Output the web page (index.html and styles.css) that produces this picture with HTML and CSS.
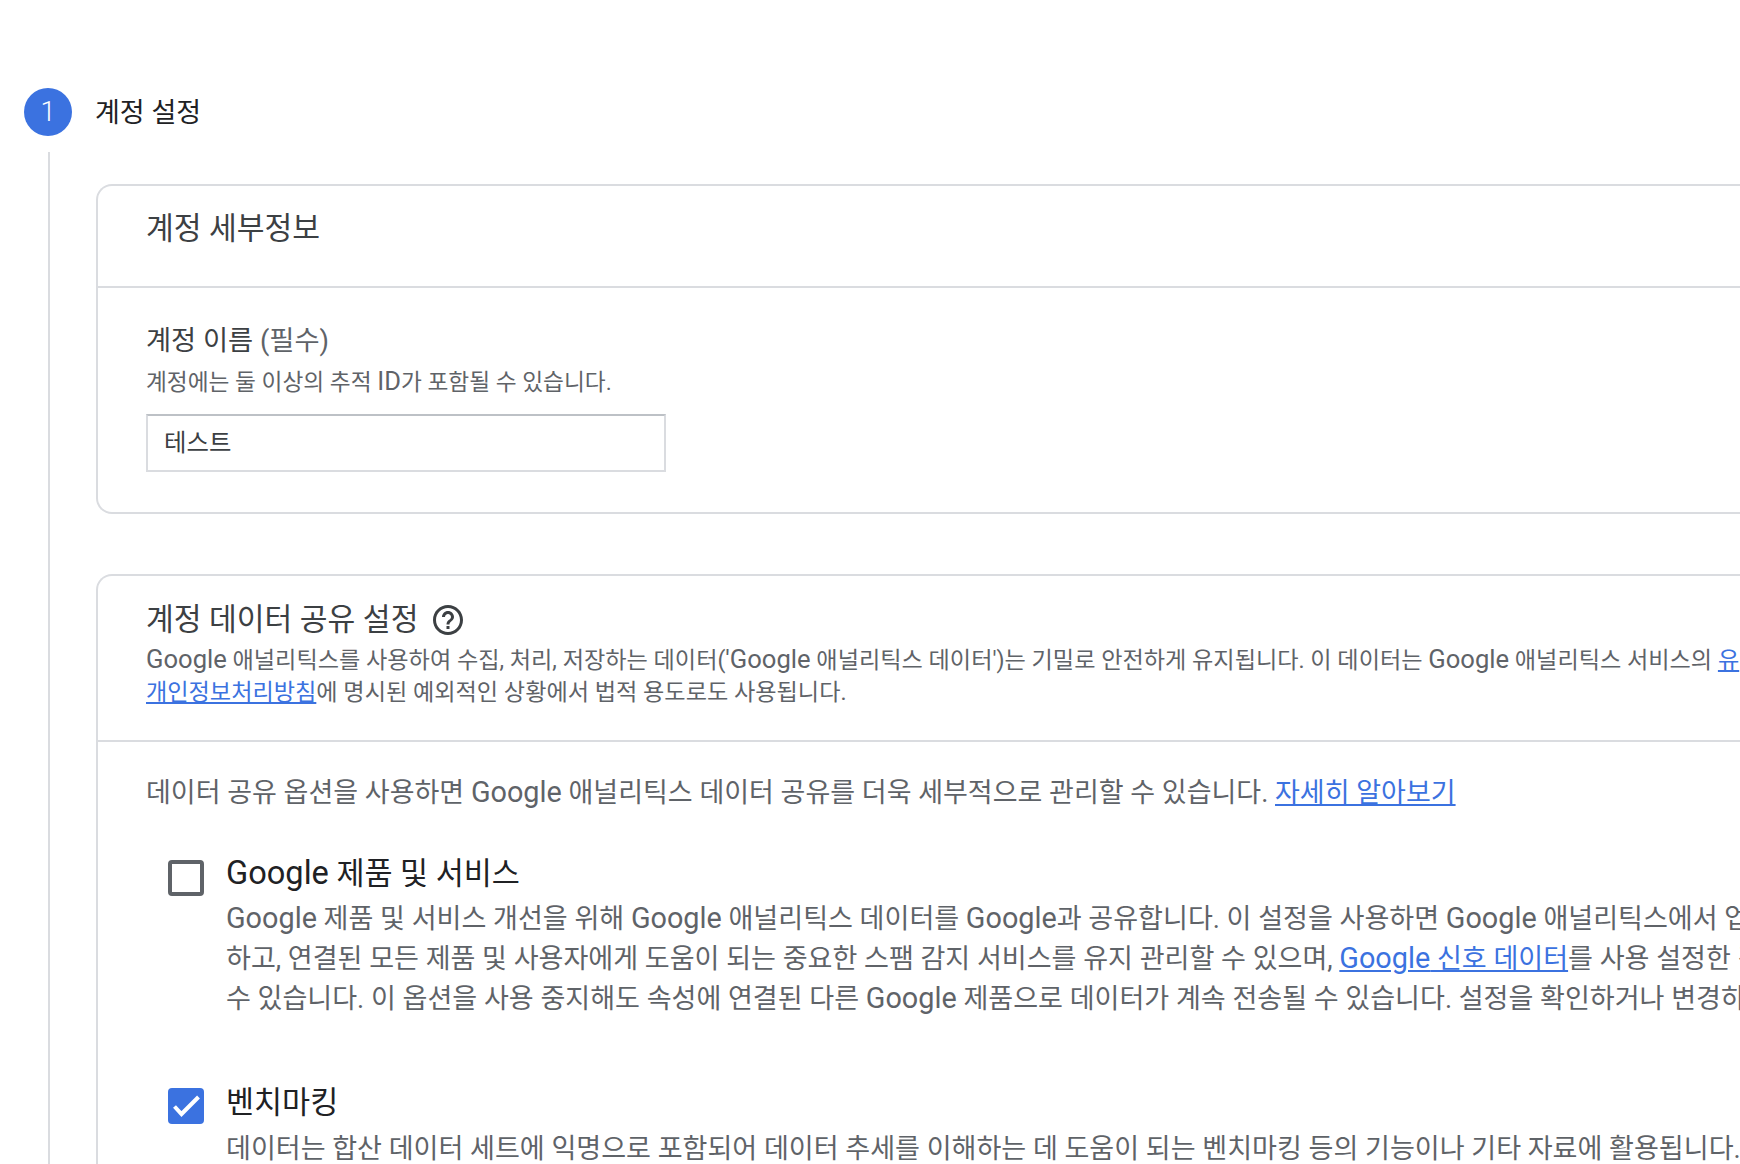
FILE: index.html
```html
<!DOCTYPE html>
<html lang="ko">
<head>
<meta charset="utf-8">
<title>계정 설정</title>
<link rel="stylesheet" href="styles.css">
</head>
<body>
<div class="page">
  <div class="step-head">
    <div class="step-num">1</div>
    <div class="step-title">계정 설정</div>
  </div>
  <div class="step-body">
    <section class="card card-first">
      <div class="card-head head-details">
        <h2 class="card-title">계정 세부정보</h2>
      </div>
      <div class="card-content content-details">
        <div class="field-label">계정 이름 <span class="muted">(필수)</span></div>
        <div class="hint">계정에는 둘 이상의 추적 <span class="en">ID</span>가 포함될 수 있습니다.</div>
        <div class="text-input">테스트</div>
      </div>
    </section>
    <section class="card card-last">
      <div class="card-head head-sharing">
        <h2 class="card-title title-row">계정 데이터 공유 설정
          <svg class="help" viewBox="0 0 24 24" aria-hidden="true"><path d="M11 18h2v-2h-2v2zm1-16C6.48 2 2 6.48 2 12s4.48 10 10 10 10-4.48 10-10S17.52 2 12 2zm0 18c-4.41 0-8-3.59-8-8s3.59-8 8-8 8 3.59 8 8-3.59 8-8 8zm0-14c-2.21 0-4 1.79-4 4h2c0-1.1.9-2 2-2s2 .9 2 2c0 2-3 1.75-3 5h2c0-2.25 3-2.5 3-5 0-2.21-1.79-4-4-4z"/></svg>
        </h2>
        <p class="desc"><span class="line"><span class="en">Google</span> 애널리틱스를 사용하여 수집, 처리, 저장하는 데이터(<span class="en">'Google</span> 애널리틱스 데이터')는 기밀로 안전하게 유지됩니다. 이 데이터는 <span class="en">Google</span> 애널리틱스 서비스의 <a class="link" href="#">유</a></span><span class="line"><a class="link" href="#">개인정보처리방침</a>에 명시된 예외적인 상황에서 법적 용도로도 사용됩니다.</span></p>
      </div>
      <div class="card-content content-sharing">
        <p class="intro">데이터 공유 옵션을 사용하면 <span class="en">Google</span> 애널리틱스 데이터 공유를 더욱 세부적으로 관리할 수 있습니다. <a class="link" href="#">자세히 알아보기</a></p>
        <div class="option option-first">
          <span class="check"></span>
          <div class="option-text">
            <div class="option-title"><span class="en">Google</span> 제품 및 서비스</div>
            <p class="option-desc"><span class="line"><span class="en">Google</span> 제품 및 서비스 개선을 위해 <span class="en">Google</span> 애널리틱스 데이터를 <span class="en">Google</span>과 공유합니다. 이 설정을 사용하면 <span class="en">Google</span> 애널리틱스에서 업</span><span class="line">하고, 연결된 모든 제품 및 사용자에게 도움이 되는 중요한 스팸 감지 서비스를 유지 관리할 수 있으며, <a class="link" href="#"><span class="en">Google</span> 신호 데이터</a>를 사용 설정한 경우</span><span class="line">수 있습니다. 이 옵션을 사용 중지해도 속성에 연결된 다른 <span class="en">Google</span> 제품으로 데이터가 계속 전송될 수 있습니다. 설정을 확인하거나 변경하</span></p>
          </div>
        </div>
        <div class="option option-second">
          <span class="check check-on"><svg viewBox="0 0 36 36" aria-hidden="true"><path d="M6.5 18.5l7 7.5L30.5 9" fill="none" stroke="#fff" stroke-width="4"/></svg></span>
          <div class="option-text">
            <div class="option-title">벤치마킹</div>
            <p class="option-desc"><span class="line">데이터는 합산 데이터 세트에 익명으로 포함되어 데이터 추세를 이해하는 데 도움이 되는 벤치마킹 등의 기능이나 기타 자료에 활용됩니다.</span></p>
          </div>
        </div>
      </div>
    </section>
  </div>
</div>
</body>
</html>
```
FILE: styles.css
```css
html, body { margin: 0; padding: 0; background: #fff; }
body {
  height: 1164px;
  overflow: hidden;
  font-family: Roboto, "Noto Sans CJK KR", sans-serif;
  color: #202124;
}
.page { width: 2400px; padding: 88px 0 0 24px; }
.step-head { display: flex; align-items: center; gap: 23px; height: 48px; }
.step-num {
  width: 48px; height: 48px; border-radius: 50%;
  background: #3b72e0; color: #fff;
  display: flex; align-items: center; justify-content: center;
  font-size: 27px; font-weight: 300; line-height: 48px;
}
.step-title { font-size: 27px; line-height: 40px; padding-top: 2px; }
.step-body {
  margin: 16px 0 0 24px;
  padding: 32px 0 0 46px;
  border-left: 2px solid #dadce0;
}
.card {
  border: 2px solid #dadce0;
  border-right: 0;
  border-radius: 16px 0 0 16px;
}
.card-first { margin-bottom: 60px; }
.card-last { padding-bottom: 120px; }
.card-head { border-bottom: 2px solid #dadce0; padding-left: 48px; }
.head-details { padding-top: 23px; padding-bottom: 37px; }
.head-sharing { padding-top: 24px; padding-bottom: 31px; }
.card-title { margin: 0; font-size: 30.2px; font-weight: 400; line-height: 40px; color: #3c4043; }
.title-row { display: flex; align-items: center; gap: 12px; }
.help { width: 36px; height: 36px; fill: #3c4043; }
.card-content { padding-left: 48px; }
.content-details { padding-top: 35px; padding-bottom: 40px; }
.field-label { font-size: 27.3px; line-height: 36px; color: #3c4043; }
.muted { color: #5f6368; }
.en { line-height: 0; }
.hint { font-size: 22.7px; line-height: 32px; color: #5f6368; margin-top: 8px; }
.hint .en { font-size: 25.5px; }
.text-input {
  box-sizing: border-box;
  width: 520px; height: 58px;
  margin-top: 15px;
  padding-left: 16px;
  border: 2px solid #dadce0;
  border-top-color: #bdc1c6;
  font-size: 24.4px; line-height: 54px;
  color: #3c4043;
}
.desc { margin: 5px 0 0; font-size: 23.15px; line-height: 32px; color: #5f6368; }
.desc .en { font-size: 25.6px; }
.line { display: block; white-space: nowrap; }
.link { color: #3b72e0; text-decoration: underline; }
.content-sharing { padding-top: 31px; }
.intro { margin: 0; font-size: 27px; line-height: 40px; color: #5f6368; white-space: nowrap; }
.intro .en { font-size: 28.8px; }
.option { display: flex; gap: 22px; padding-left: 22px; }
.option-first { margin-top: 40px; }
.option-second { margin-top: 63px; }
.check {
  box-sizing: border-box;
  flex: none;
  width: 36px; height: 36px;
  margin-top: 7px;
  border: 4px solid #5f6368;
  border-radius: 4px;
}
.check-on { border: 0; background: #3b72e0; margin-top: 6px; }
.check-on svg { display: block; width: 36px; height: 36px; }
.option-title { font-size: 30.5px; line-height: 40px; padding-top: 1px; color: #202124; white-space: nowrap; }
.option-title .en { font-size: 32.6px; }
.option-desc { margin: 5px 0 0; font-size: 27.05px; line-height: 40px; color: #5f6368; }
.option-desc .en { font-size: 28.8px; }
.option-second .option-desc { margin-top: 6px; }
```
